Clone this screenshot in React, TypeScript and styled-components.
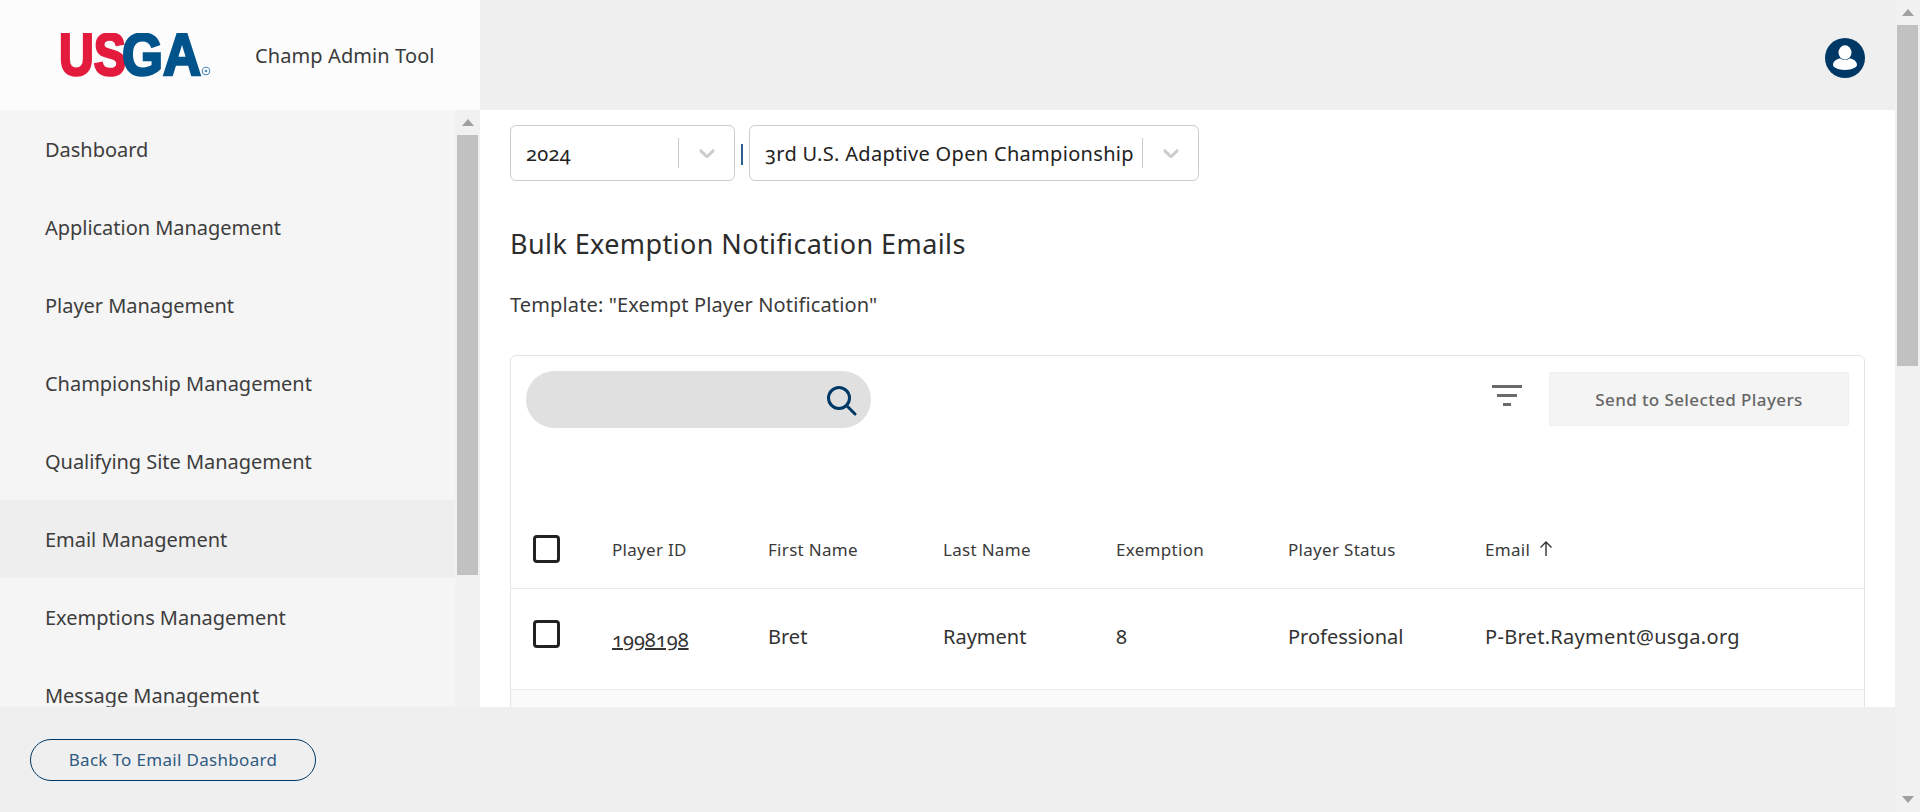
import React from "react";
import styled, { createGlobalStyle } from "styled-components";

const Global = createGlobalStyle`
  html, body { margin: 0; padding: 0; height: 100%; overflow: hidden; background: #fff; }
  * { box-sizing: border-box; }
  body { font-family: "Noto Sans", "Open Sans", sans-serif; color: #333; font-variant-numeric: oldstyle-nums; font-feature-settings: "onum" 1; }
`;

const Root = styled.div`display: flex; width: 1920px; height: 812px; overflow: hidden;`;
const Page = styled.div`flex: 1; min-width: 0; display: flex; flex-direction: column;`;
const Track = styled.div`
  flex: none; display: flex; flex-direction: column; align-items: center; background: #f1f1f1;
  padding: 0 2px; justify-content: space-between;
`;
const PageTrack = styled(Track)`width: 25px; height: 812px;`;
const SideTrack = styled(Track)`width: 25px; height: 100%;`;
const Upper = styled.div`width: 100%; display: flex; flex-direction: column; align-items: center;`;
const ArrowCell = styled.div`height: 25px; display: flex; align-items: center; justify-content: center; flex: none; width: 100%;`;
const Thumb = styled.div<{ $h: number }>`width: 100%; height: ${p => p.$h}px; background: #c1c1c1;`;
const Tri = styled.svg`width: 12px; height: 7px; fill: #a0a0a0; display: block;`;

const Top = styled.header`height: 110px; flex: none; display: flex; background: #efefef;`;
const Brand = styled.div`width: 480px; background: #fcfcfc; display: flex; align-items: center; padding-left: 58px;`;
const Logo = styled.svg`width: 154px; height: 44px; display: block; flex: none;`;
const AppName = styled.div`margin-left: 43px; font-size: 20px; color: #3a3a3a; letter-spacing: 0.1px;`;
const TopRight = styled.div`flex: 1; display: flex; align-items: center; justify-content: flex-end; padding: 6px 30px 0 0;`;

const Middle = styled.div`flex: 1; min-height: 0; display: flex;`;
const Side = styled.aside`width: 480px; flex: none; display: flex; background: #f5f5f5;`;
const Nav = styled.nav`flex: 1; min-width: 0; overflow: hidden;`;
const NavItem = styled.div<{ $active?: boolean }>`
  height: 78px; display: flex; align-items: center; padding-left: 45px; font-size: 20px; color: #3d3d3d;
  background: ${p => (p.$active ? "#eeeeee" : "transparent")}; letter-spacing: -0.03px;
`;

const Main = styled.main`flex: 1; min-width: 0; overflow: hidden; background: #fff; padding: 15px 30px 0 30px;`;
const Filters = styled.div`display: flex; align-items: center;`;
const Select = styled.div<{ $w: number }>`
  width: ${p => p.$w}px; height: 56px; border: 1px solid #ccc; border-radius: 6px; display: flex; align-items: center; padding-left: 15px; background: #fff;
`;
const SelectValue = styled.div`flex: 1; font-size: 20px; color: #222; white-space: nowrap; overflow: hidden; letter-spacing: 0.31px;`;
const SelectSep = styled.div`width: 1px; height: 30px; background: #ccc; flex: none;`;
const SelectArrow = styled.div`width: 55px; flex: none; display: flex; justify-content: center; align-items: center;`;
const Pipe = styled.div`width: 14px; text-align: center; display: flex; justify-content: center;`;
const PipeBar = styled.div`width: 2px; height: 21px; margin-top: 3px; background: #2f5f8f;`;
const Title = styled.h1`margin: 45px 0 0; font-size: 27px; line-height: 36px; font-weight: 400; color: #2c2c2c; letter-spacing: 0.4px;`;
const Template = styled.p`margin: 27px 0 0; font-size: 20px; line-height: 32px; color: #3a3a3a; letter-spacing: 0.13px;`;

const Card = styled.section`margin-top: 34px; border: 1px solid #e4e4e4; border-radius: 6px 6px 0 0; background: #fff; width: 1355px;`;
const Toolbar = styled.div`height: 156px; padding: 15px 15px 0 15px; display: flex; align-items: flex-start;`;
const Search = styled.div`
  width: 345px; height: 57px; border-radius: 29px; background: #e0e0e0; display: flex; align-items: center; justify-content: flex-end; padding-right: 14px;
`;
const Spacer = styled.div`flex: 1;`;
const FilterBtn = styled.div`margin-top: 14px; margin-right: 27px; display: flex;`;
const SendBtn = styled.button`
  width: 300px; height: 54px; margin-top: 1px; background: #f4f4f4; border: 1px solid #eeeeee; border-radius: 2px; font: 500 17px "Noto Sans", sans-serif; color: #666; letter-spacing: 0.4px;
`;
const Row = styled.div<{ $h: number; $bg?: string }>`
  display: grid; grid-template-columns: 101px 156px 175px 173px 172px 197px 1fr; align-items: center;
  height: ${p => p.$h}px; background: ${p => p.$bg || "#fff"}; border-bottom: 1px solid #ebebeb; 
`;
const HeadCell = styled.div`font-size: 17px; color: #3a3a3a; display: flex; align-items: center; gap: 7px; margin-top: -2px; letter-spacing: 0.3px;`;
const Cell = styled.div`font-size: 20px; color: #333; margin-top: -6px;`;
const EmailCell = styled(Cell)`letter-spacing: 0.3px;`;
const IdLink = styled.a`font-size: 20px; color: #333; text-decoration: underline;`;
const CheckCell = styled.div<{ $up?: number }>`padding-left: 22px; display: flex; margin-top: ${p => p.$up || 0}px;`;
const Check = styled.span`width: 27px; height: 28px; border: 3px solid #222; border-radius: 4px; display: block; background: #fff;`;

const Footer = styled.footer`height: 105px; flex: none; background: #efefef; padding: 32px 0 0 30px;`;
const BackBtn = styled.button`
  width: 286px; height: 42px; border-radius: 21px; border: 1.5px solid #003865; background: transparent; color: #2f5a82; font: 400 17px "Noto Sans", sans-serif; letter-spacing: 0.32px; padding-bottom: 3px;
`;

const nav = ["Dashboard", "Application Management", "Player Management", "Championship Management", "Qualifying Site Management", "Email Management", "Exemptions Management", "Message Management"];
const chevron = "M4.516 7.548c0.436-0.446 1.043-0.481 1.576 0l3.908 3.747 3.908-3.747c0.533-0.481 1.141-0.446 1.574 0 0.436 0.445 0.408 1.197 0 1.615-0.406 0.418-4.695 4.502-4.695 4.502-0.217 0.223-0.502 0.335-0.787 0.335s-0.57-0.112-0.789-0.335c0 0-4.287-4.084-4.695-4.502s-0.436-1.17 0-1.615z";

const Up = () => <Tri viewBox="0 0 12 7"><path d="M6 0l6 7H0z" /></Tri>;
const Down = () => <Tri viewBox="0 0 12 7"><path d="M0 0h12L6 7z" /></Tri>;
const Chevron = () => <svg width="26" height="26" viewBox="0 0 20 20" fill="#cccccc"><path d={chevron} /></svg>;

const Dropdown = ({ w, v }: { w: number; v: string }) => (
  <Select $w={w}>
    <SelectValue>{v}</SelectValue>
    <SelectSep />
    <SelectArrow><Chevron /></SelectArrow>
  </Select>
);

export default function App() {
  return (
    <Root>
      <Global />
      <Page>
        <Top>
          <Brand>
            <Logo viewBox="0 0 154 44" aria-label="USGA logo">
              <text x="1" y="42" fontFamily="Liberation Sans" fontWeight="700" fontSize="59" fill="#e31b3c" stroke="#e31b3c" strokeWidth="2.6" textLength="67" lengthAdjust="spacingAndGlyphs">US</text>
              <text x="64" y="42" fontFamily="Liberation Sans" fontWeight="700" fontSize="59" fill="#00538b" stroke="#00538b" strokeWidth="2.6" textLength="79" lengthAdjust="spacingAndGlyphs">GA</text>
              <circle cx="148" cy="38" r="3.7" fill="none" stroke="#4d8bbb" strokeWidth="1.1" />
              <circle cx="148" cy="38" r="1.3" fill="#4d8bbb" />
            </Logo>
            <AppName>Champ Admin Tool</AppName>
          </Brand>
          <TopRight>
            <svg width="40" height="40" viewBox="0 0 40 40">
              <circle cx="20" cy="20" r="20" fill="#003865" />
              <ellipse cx="20" cy="14.5" rx="6.5" ry="7.2" fill="#fff" />
              <path d="M8 27c0-4 4.5-6.5 7.5-6.5 1.5 1 3 1.5 4.5 1.5s3-.5 4.5-1.5c3 0 7.5 2.500 7.500 6.500 0 2-5 5-12 5S8 29 8 27z" fill="#fff" />
            </svg>
          </TopRight>
        </Top>
        <Middle>
          <Side>
            <Nav>
              {nav.map(n => <NavItem key={n} $active={n === "Email Management"}>{n}</NavItem>)}
            </Nav>
            <SideTrack>
              <Upper>
                <ArrowCell><Up /></ArrowCell>
                <Thumb $h={440} />
              </Upper>
            </SideTrack>
          </Side>
          <Main>
            <Filters>
              <Dropdown w={225} v="2024" />
              <Pipe><PipeBar /></Pipe>
              <Dropdown w={450} v="3rd U.S. Adaptive Open Championship" />
            </Filters>
            <Title>Bulk Exemption Notification Emails</Title>
            <Template>Template: "Exempt Player Notification"</Template>
            <Card>
              <Toolbar>
                <Search>
                  <svg width="32" height="32" viewBox="0 0 32 32" fill="none" stroke="#003865" strokeWidth="3" strokeLinecap="round">
                    <circle cx="14" cy="14" r="10.500" />
                    <path d="M22 22l8 8" />
                  </svg>
                </Search>
                <Spacer />
                <FilterBtn>
                  <svg width="30" height="22" viewBox="0 0 30 22" fill="#6a6a6a">
                    <rect x="0" y="0" width="30" height="3" />
                    <rect x="5" y="9" width="20" height="3" />
                    <rect x="11" y="18" width="8" height="3" />
                  </svg>
                </FilterBtn>
                <SendBtn>Send to Selected Players</SendBtn>
              </Toolbar>
              <Row $h={77}>
                <CheckCell $up={-2}><Check /></CheckCell>
                <HeadCell>Player ID</HeadCell>
                <HeadCell>First Name</HeadCell>
                <HeadCell>Last Name</HeadCell>
                <HeadCell>Exemption</HeadCell>
                <HeadCell>Player Status</HeadCell>
                <HeadCell>
                  Email
                  <svg width="18" height="18" viewBox="0 0 18 18" fill="none" stroke="#333" strokeWidth="1.4"><path d="M9 16V2M3.500 7.500L9 2l5.500 5.500" /></svg>
                </HeadCell>
              </Row>
              <Row $h={101}>
                <CheckCell $up={-10}><Check /></CheckCell>
                <div><IdLink>1998198</IdLink></div>
                <Cell>Bret</Cell>
                <Cell>Rayment</Cell>
                <Cell>8</Cell>
                <Cell>Professional</Cell>
                <EmailCell>P-Bret.Rayment@usga.org</EmailCell>
              </Row>
              <Row $h={100} $bg="#fafafa" />
            </Card>
          </Main>
        </Middle>
        <Footer>
          <BackBtn>Back To Email Dashboard</BackBtn>
        </Footer>
      </Page>
      <PageTrack>
        <Upper>
          <ArrowCell><Up /></ArrowCell>
          <Thumb $h={341} />
        </Upper>
        <ArrowCell><Down /></ArrowCell>
      </PageTrack>
    </Root>
  );
}
